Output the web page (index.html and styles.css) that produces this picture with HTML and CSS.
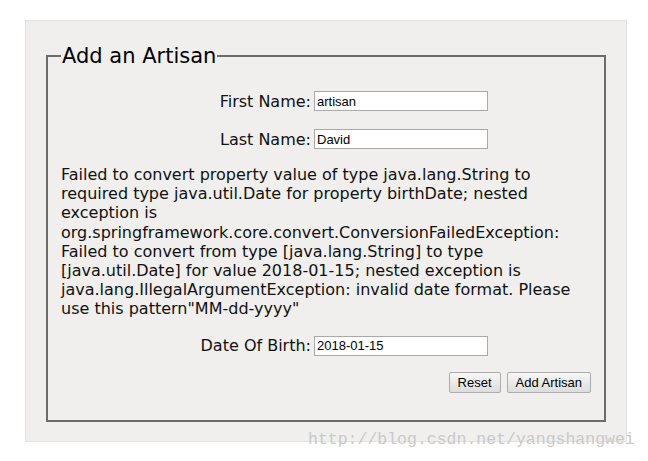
FILE: index.html
```html
<!DOCTYPE html>
<html>
<head>
<meta charset="utf-8">
<title>Add an Artisan</title>
<link rel="stylesheet" href="styles.css">
</head>
<body>
<div class="panel">
  <form class="form">
    <fieldset class="box">
      <legend class="legend">Add an Artisan</legend>
      <div class="row first">
        <label class="label">First Name:</label>
        <input class="field" type="text" value="artisan">
      </div>
      <div class="row">
        <label class="label">Last Name:</label>
        <input class="field" type="text" value="David">
      </div>
      <p class="error">Failed to convert property value of type java.lang.String to required type java.util.Date for property birthDate; nested exception is org.springframework.core.convert.ConversionFailedException: Failed to convert from type [java.lang.String] to type [java.util.Date] for value 2018-01-15; nested exception is java.lang.IllegalArgumentException: invalid date format. Please use this pattern"MM-dd-yyyy"</p>
      <div class="row dob">
        <label class="label">Date Of Birth:</label>
        <input class="field" type="text" value="2018-01-15">
      </div>
      <div class="actions">
        <button class="btn" type="button">Reset</button>
        <button class="btn" type="button">Add Artisan</button>
      </div>
    </fieldset>
  </form>
</div>
<div class="watermark">http://blog.csdn.net/yangshangwei</div>
</body>
</html>
```
FILE: styles.css
```css
html, body {
  margin: 0;
  padding: 0;
  background: #ffffff;
}
body {
  position: relative;
  width: 648px;
  height: 461px;
  overflow: hidden;
  font-family: "DejaVu Sans", Verdana, sans-serif;
  color: #111;
}
.panel {
  margin: 20px 0 0 25px;
  width: 602px;
  height: 422px;
  box-sizing: border-box;
  background: #f0efee;
  border: 1px solid #e4e3e2;
  padding: 23px 21px 0 20px;
}
.form {
  margin: 0;
}
.box {
  margin: 0;
  width: 559px;
  height: 378px;
  box-sizing: border-box;
  border: 2px solid #6c6c6c;
  padding: 0 13px;
}
.legend {
  font-size: 21px;
  padding: 0 1px;
  color: #000;
}
.row {
  display: flex;
  align-items: center;
  height: 20px;
  margin-top: 18px;
}
.row.first {
  margin-top: 23px;
}
.label {
  width: 250px;
  text-align: right;
  font-size: 16px;
  margin-right: 3px;
}
.field {
  width: 174px;
  height: 20px;
  box-sizing: border-box;
  margin: 0;
  border: 1px solid #a9a9a9;
  background: #fff;
  font-family: "Liberation Sans", Arial, sans-serif;
  font-size: 13px;
  padding: 1px 2px;
  color: #000;
}
.error {
  margin: 16px 0 0 0;
  font-size: 16px;
  line-height: 19.2px;
  width: 530px;
}
.row.dob {
  margin-top: 17px;
}
.actions {
  display: flex;
  justify-content: flex-end;
  gap: 6px;
  margin-top: 16px;
}
.btn {
  margin: 0;
  height: 21px;
  padding: 0 8px;
  font-family: "Liberation Sans", Arial, sans-serif;
  font-size: 13px;
  color: #000;
  background: linear-gradient(#f7f7f7, #dddddd);
  border: 1px solid #acacac;
  border-radius: 2px;
}
.watermark {
  position: absolute;
  left: 308px;
  top: 430px;
  font-family: "Liberation Mono", "Courier New", monospace;
  font-size: 16.5px;
  color: #c9c9c9;
  letter-spacing: 0;
  white-space: nowrap;
}
```
